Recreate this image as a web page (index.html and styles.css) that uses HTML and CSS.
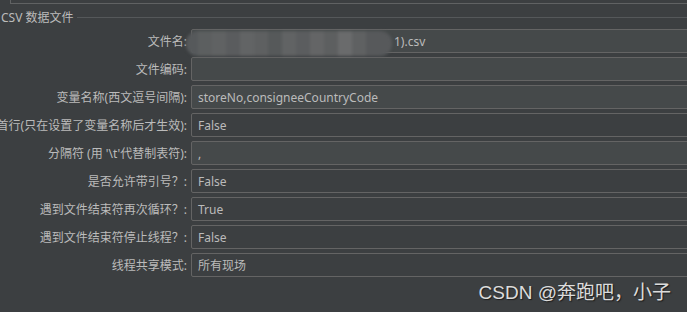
FILE: index.html
```html
<!DOCTYPE html>
<html>
<head>
  <link rel="stylesheet" href="styles.css">
</head>
<body>
  <div class="top-box"></div>

  <div class="group-head">
    <span class="group-title">CSV 数据文件</span>
    <span class="group-line"></span>
  </div>

  <div class="form">
    <div class="row">
      <div class="label"><span>文件名:</span></div>
      <div class="field text"><span class="masked"></span><span class="tail">1).csv</span></div>
    </div>
    <div class="row">
      <div class="label"><span>文件编码:</span></div>
      <div class="field text"></div>
    </div>
    <div class="row">
      <div class="label"><span>变量名称(西文逗号间隔):</span></div>
      <div class="field text">storeNo,consigneeCountryCode</div>
    </div>
    <div class="row">
      <div class="label"><span>忽略首行(只在设置了变量名称后才生效):</span></div>
      <div class="field">False</div>
    </div>
    <div class="row">
      <div class="label"><span>分隔符 (用 '\t'代替制表符):</span></div>
      <div class="field text">,</div>
    </div>
    <div class="row">
      <div class="label"><span>是否允许带引号？:</span></div>
      <div class="field">False</div>
    </div>
    <div class="row">
      <div class="label"><span>遇到文件结束符再次循环？:</span></div>
      <div class="field">True</div>
    </div>
    <div class="row">
      <div class="label"><span>遇到文件结束符停止线程？:</span></div>
      <div class="field">False</div>
    </div>
    <div class="row">
      <div class="label"><span>线程共享模式:</span></div>
      <div class="field">所有现场</div>
    </div>
  </div>

  <div class="watermark">CSDN @奔跑吧，小子</div>
</body>
</html>
```

FILE: styles.css
```css
html, body {
  margin: 0;
  height: 100%;
}
body {
  position: relative;
  overflow: hidden;
  background: #3c3f41;
  color: #bbbbbb;
  font-family: "Noto Sans", "Noto Sans CJK SC", sans-serif;
  font-size: 12px;
}
.top-box {
  margin-left: 10px;
  height: 3px;
  border-left: 1px solid #606263;
  border-bottom: 1px solid #606263;
}
.group-head {
  display: flex;
  align-items: center;
  height: 16px;
  margin-top: 5px;
}
.group-title {
  padding-left: 1px;
  white-space: nowrap;
}
.group-line {
  flex: 1;
  height: 1px;
  margin-left: 3px;
  background: #55585a;
}
.form {
  display: flex;
  flex-direction: column;
  gap: 4px;
  margin-top: 4px;
}
.row {
  display: flex;
  align-items: center;
  gap: 4px;
  height: 24px;
}
.label {
  width: 187px;
  flex-shrink: 0;
  display: flex;
  justify-content: flex-end;
  overflow: hidden;
  white-space: nowrap;
}
.field {
  width: 620px;
  flex-shrink: 0;
  height: 24px;
  box-sizing: border-box;
  display: flex;
  align-items: center;
  padding: 0 6px;
  border: 1px solid #646464;
  border-radius: 2px;
  white-space: nowrap;
}
.field.text {
  background: #45494a;
}
.masked {
  width: 206px;
  height: 25px;
  margin-left: -12px;
  margin-top: 4px;
  border-radius: 12px;
  flex-shrink: 0;
  background:
    linear-gradient(90deg,
      #56595b 0 12px, #5c5f60 12px 26px, #606263 26px 40px, #5a5c5e 40px 54px,
      #626465 54px 68px, #5e6061 68px 82px, #56595a 82px 96px, #616364 96px 110px,
      #5b5d5f 110px 124px, #646566 124px 138px, #5d5f60 138px 152px, #6a6b6c 152px 166px,
      #5f6162 166px 180px, #57595b 180px 206px);
  filter: blur(1.5px);
}
.tail {
  margin-left: 2px;
}
.watermark {
  position: absolute;
  right: 16px;
  bottom: 8px;
  font-family: "Liberation Sans", "Noto Sans CJK SC", sans-serif;
  font-size: 19px;
  color: #dcdcdc;
  text-shadow: 1px 1px 1px #1e1e1e;
  white-space: nowrap;
}
```
